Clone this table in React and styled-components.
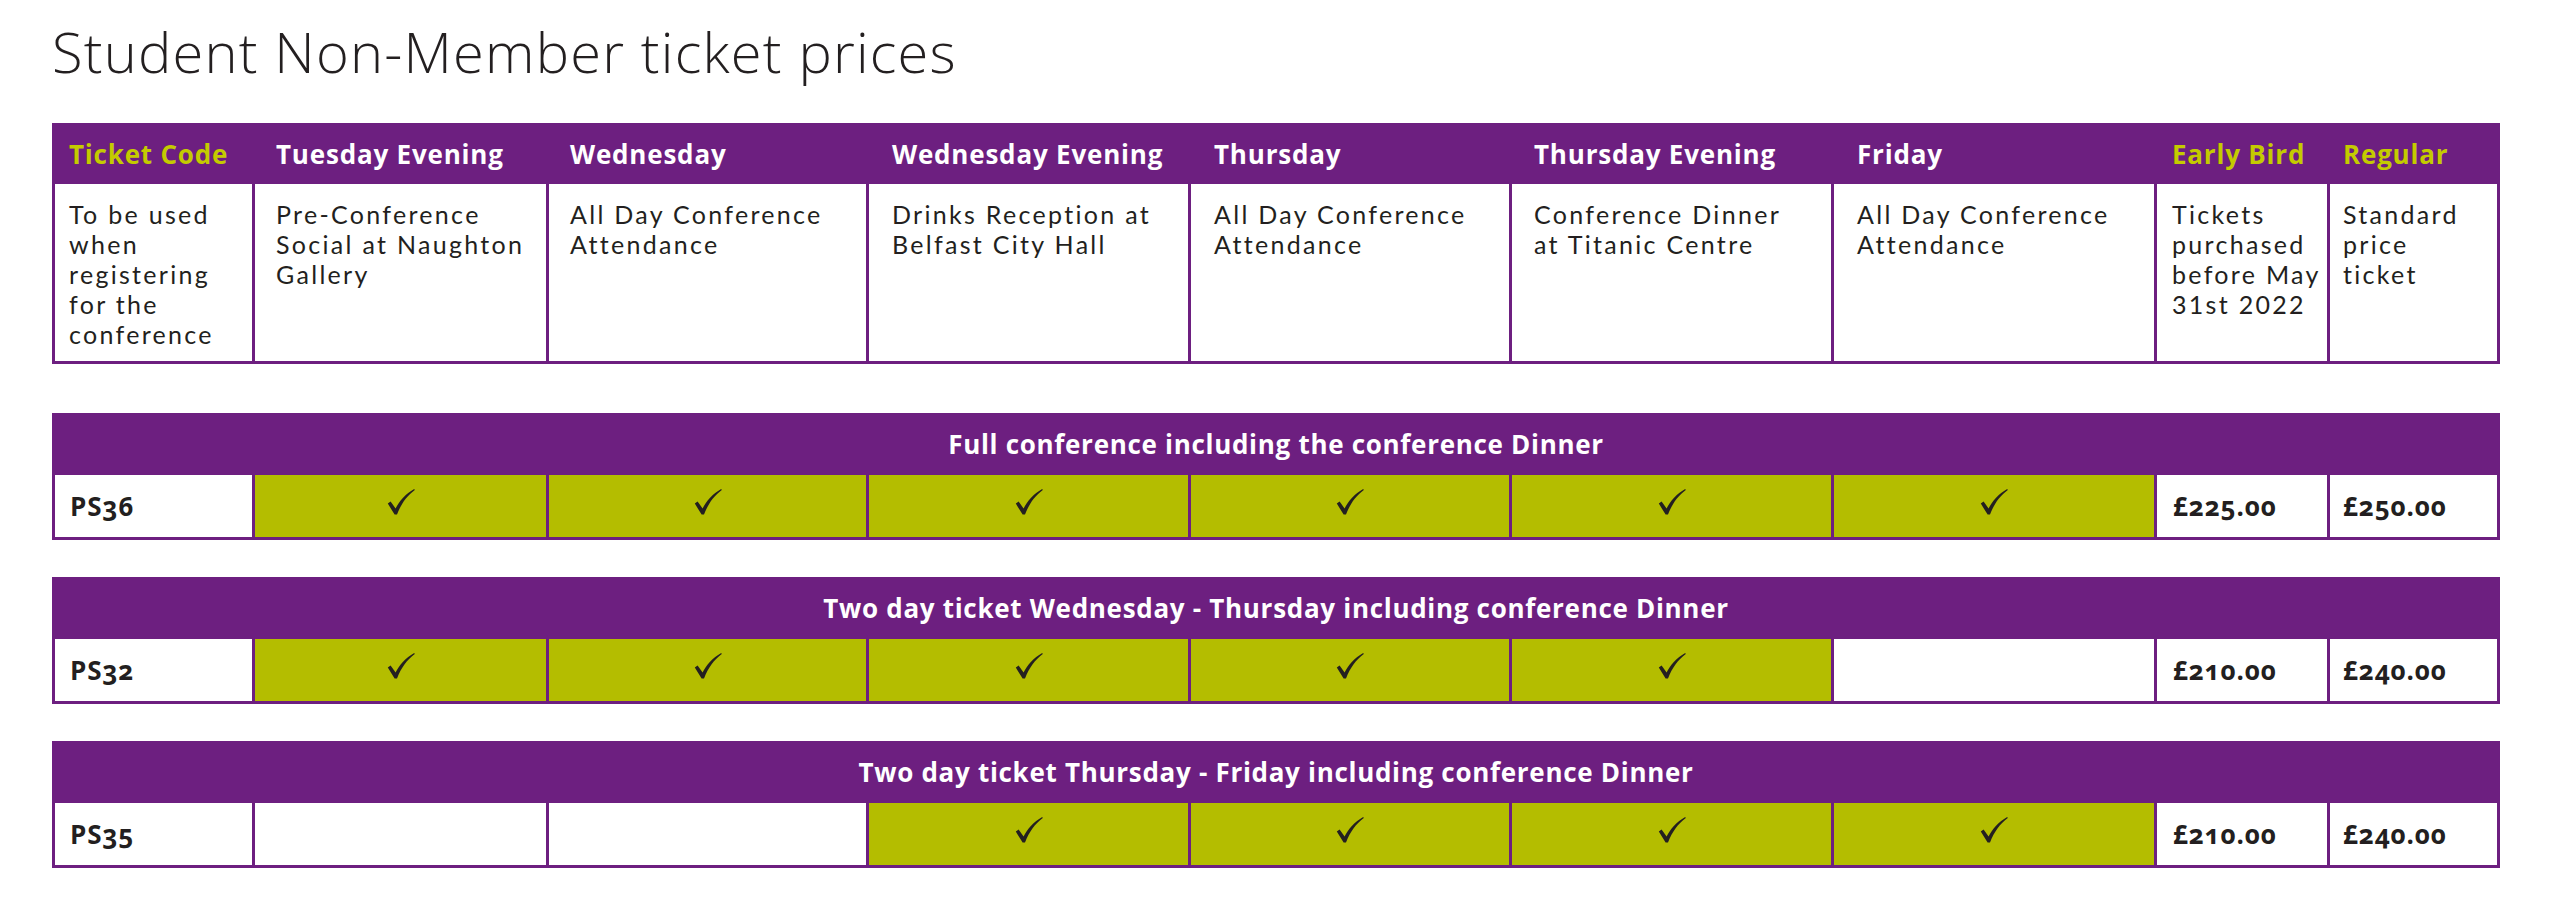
import React from 'react';
import styled, { createGlobalStyle } from 'styled-components';

const PURPLE = '#6d1f80';
const GREEN = '#b4bd00';
const LIME = '#c4cb00';
const INK = '#231f20';

const GlobalStyle = createGlobalStyle`
  html, body { margin: 0; padding: 0; background: #ffffff; }
  body { font-family: 'Open Sans', 'Lato', sans-serif; color: ${INK}; }
`;

const COLS = '197px 291px 317px 319px 318px 319px 320px 170px 167px';
const PAD = [14, 21, 21, 23, 23, 22, 23, 15, 13];

const Page = styled.div`
  padding: 18px 60px 0 52px;
  width: 2448px;
`;

const Title = styled.h1`
  margin: 0 0 38px 0;
  font-family: 'Open Sans', sans-serif;
  font-weight: 300;
  font-size: 56px;
  line-height: 67px;
  letter-spacing: 1.2px;
  color: ${INK};
`;

const Grid = styled.div`
  display: grid;
  grid-template-columns: ${COLS};
  gap: 3px;
  padding: 3px;
  background: ${PURPLE};
  margin-bottom: ${(p) => p.$mb}px;
`;

const HeadCell = styled.div`
  height: 55px;
  display: flex;
  align-items: center;
  padding-left: ${(p) => p.$pad}px;
  font-weight: 700;
  font-size: 26px;
  letter-spacing: 0.8px;
  color: ${(p) => (p.$accent ? LIME : '#ffffff')};
  white-space: nowrap;
`;

const DescCell = styled.div`
  background: #ffffff;
  height: 177px;
  box-sizing: border-box;
  padding: 15px 4px 0 ${(p) => p.$pad}px;
  font-family: 'Lato', 'Open Sans', sans-serif;
  font-size: 25px;
  line-height: 30px;
  letter-spacing: 2.3px;
  color: ${INK};
  overflow: hidden;
`;

const Line = styled.span`
  display: block;
  white-space: nowrap;
`;

const GroupHead = styled.div`
  grid-column: 1 / -1;
  height: 56px;
  display: flex;
  align-items: center;
  justify-content: center;
  font-weight: 700;
  font-size: 26px;
  letter-spacing: 0.7px;
  color: #ffffff;
`;

const DataCell = styled.div`
  height: 62px;
  display: flex;
  align-items: center;
  justify-content: ${(p) => (p.$center ? 'center' : 'flex-start')};
  padding-left: ${(p) => (p.$center ? 0 : p.$pad)}px;
  background: ${(p) => (p.$on ? GREEN : '#ffffff')};
  font-weight: 700;
  font-size: 26px;
  letter-spacing: 0.9px;
  color: ${INK};
  font-variant-numeric: oldstyle-nums;
`;

const CheckSvg = styled.svg`
  width: 28px;
  height: 26px;
  margin-top: -9px;
  display: block;
`;

const Check = () => (
  <CheckSvg viewBox="0 0 28 26" aria-hidden="true">
    <path
      d="M0.8 14.6 L3.6 12.6 L8.6 19.6 C12.4 11.8 18.6 4.8 27.2 0 L27.8 0.9 C20.2 6.6 14.2 14.2 10 25.6 L7.6 25.6 Z"
      fill={INK}
    />
  </CheckSvg>
);

const headers = [
  { t: 'Ticket Code', accent: true },
  { t: 'Tuesday Evening' },
  { t: 'Wednesday' },
  { t: 'Wednesday Evening' },
  { t: 'Thursday' },
  { t: 'Thursday Evening' },
  { t: 'Friday' },
  { t: 'Early Bird', accent: true },
  { t: 'Regular', accent: true },
];

const descs = [
  ['To be used', 'when', 'registering', 'for the', 'conference'],
  ['Pre-Conference', 'Social at Naughton', 'Gallery'],
  ['All Day Conference', 'Attendance'],
  ['Drinks Reception at', 'Belfast City Hall'],
  ['All Day Conference', 'Attendance'],
  ['Conference Dinner', 'at Titanic Centre'],
  ['All Day Conference', 'Attendance'],
  ['Tickets', 'purchased', 'before May', '31st 2022'],
  ['Standard', 'price', 'ticket'],
];

const tickets = [
  {
    title: 'Full conference including the conference Dinner',
    code: 'PS36',
    days: [true, true, true, true, true, true],
    early: '£225.00',
    regular: '£250.00',
  },
  {
    title: 'Two day ticket Wednesday - Thursday including conference Dinner',
    code: 'PS32',
    days: [true, true, true, true, true, false],
    early: '£210.00',
    regular: '£240.00',
  },
  {
    title: 'Two day ticket Thursday - Friday including conference Dinner',
    code: 'PS35',
    days: [false, false, true, true, true, true],
    early: '£210.00',
    regular: '£240.00',
  },
];

export default function App() {
  return (
    <>
      <GlobalStyle />
      <Page>
        <Title>Student Non-Member ticket prices</Title>
        <Grid $mb={49}>
          {headers.map((h, i) => (
            <HeadCell key={h.t} $pad={PAD[i]} $accent={h.accent}>
              {h.t}
            </HeadCell>
          ))}
          {descs.map((lines, i) => (
            <DescCell key={i} $pad={PAD[i]}>
              {lines.map((l) => (
                <Line key={l}>{l}</Line>
              ))}
            </DescCell>
          ))}
        </Grid>
        {tickets.map((tk, idx) => (
          <Grid key={tk.code} $mb={idx < tickets.length - 1 ? 37 : 0}>
            <GroupHead>{tk.title}</GroupHead>
            <DataCell $pad={15}>{tk.code}</DataCell>
            {tk.days.map((on, i) => (
              <DataCell key={i} $center $on={on}>
                {on ? <Check /> : null}
              </DataCell>
            ))}
            <DataCell $pad={16}>{tk.early}</DataCell>
            <DataCell $pad={13}>{tk.regular}</DataCell>
          </Grid>
        ))}
      </Page>
    </>
  );
}
